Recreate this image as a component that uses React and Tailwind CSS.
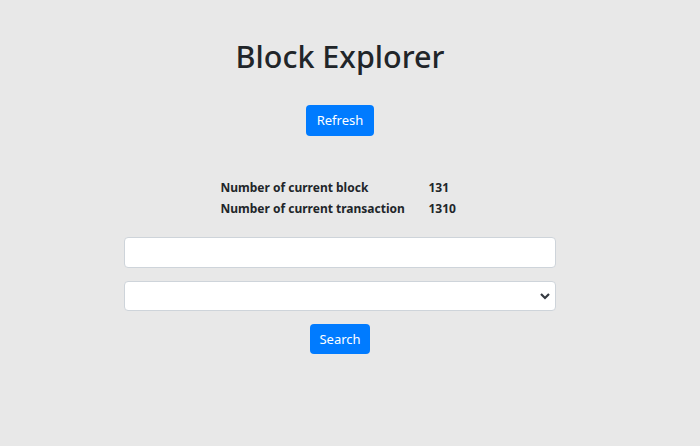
import React, { useState } from "react";

export default function App() {
  const [query, setQuery] = useState("");
  const [kind, setKind] = useState("");

  return (
    <div
      className="min-h-[446px] w-full bg-[#e8e8e8] pr-[20px] text-[#212529]"
      style={{ fontFamily: '"Noto Sans", "Open Sans", sans-serif' }}
    >
      <div className="flex flex-col items-center pt-[34px]">
        <h1 className="text-[30.5px] font-medium leading-[44px]">Block Explorer</h1>

        <button className="mt-[27px] h-[31px] rounded-[4px] bg-[#007bff] px-[11px] text-[13px] leading-none text-white">
          Refresh
        </button>

        {/* Stats */}
        <table className="mt-[41px] text-[12px] font-bold">
          <tbody>
            <tr className="h-[21px]">
              <td className="w-[208px]">Number of current block</td>
              <td className="w-[31px]">131</td>
            </tr>
            <tr className="h-[21px]">
              <td>Number of current transaction</td>
              <td>1310</td>
            </tr>
          </tbody>
        </table>

        <div className="mt-[18px] flex w-[432px] flex-col items-center gap-[13px]">
          <input
            value={query}
            onChange={(e) => setQuery(e.target.value)}
            className="h-[31px] w-full rounded-[4px] border border-[#ced4da] bg-white px-3 text-sm outline-none"
          />
          <div className="relative w-full">
            <select
              value={kind}
              onChange={(e) => setKind(e.target.value)}
              className="h-[30px] w-full appearance-none rounded-[4px] border border-[#ced4da] bg-white px-3 text-sm outline-none"
            >
              <option value=""></option>
              <option value="block">Block</option>
              <option value="transaction">Transaction</option>
            </select>
            <svg
              className="pointer-events-none absolute right-[5px] top-[10px]"
              width="12"
              height="10"
              viewBox="0 0 12 10"
            >
              <path d="M2 3l4 4 4-4" fill="none" stroke="#343a40" strokeWidth="2.2" />
            </svg>
          </div>
          <button className="h-[30px] rounded-[4px] bg-[#007bff] px-[9px] text-[13px] leading-none text-white">
            Search
          </button>
        </div>
      </div>
    </div>
  );
}
